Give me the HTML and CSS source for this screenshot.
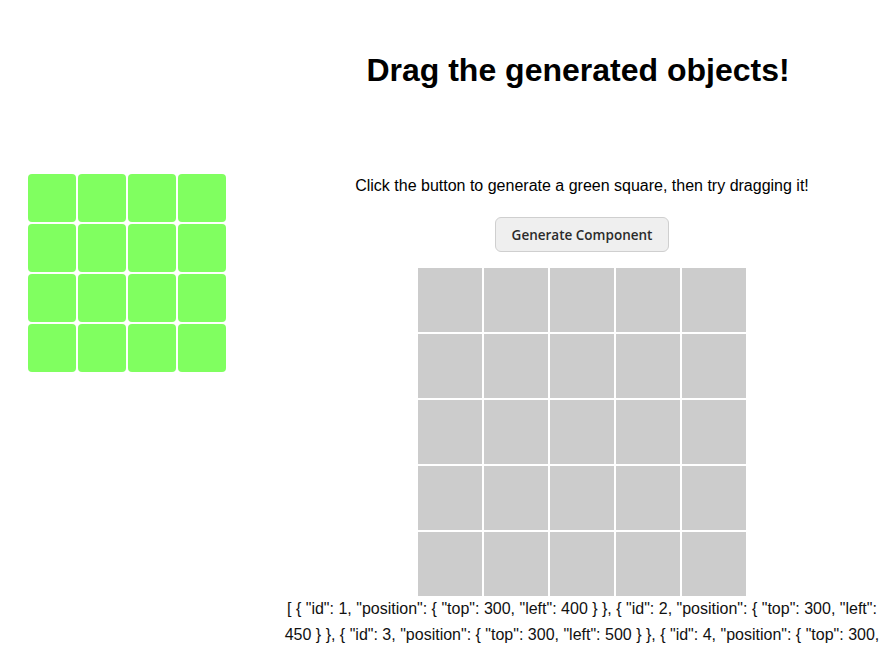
FILE: index.html
```html
<!DOCTYPE html>
<html lang="en">
<head>
<meta charset="utf-8">
<title>Drag the generated objects!</title>
<link rel="stylesheet" href="styles.css">
</head>
<body>
<div class="page">
  <aside class="palette">
    <div class="green-grid">
      <div class="tile"></div><div class="tile"></div><div class="tile"></div><div class="tile"></div>
      <div class="tile"></div><div class="tile"></div><div class="tile"></div><div class="tile"></div>
      <div class="tile"></div><div class="tile"></div><div class="tile"></div><div class="tile"></div>
      <div class="tile"></div><div class="tile"></div><div class="tile"></div><div class="tile"></div>
    </div>
  </aside>
  <main class="main">
    <h1 class="title">Drag the generated objects!</h1>
    <p class="intro">Click the button to generate a green square, then try dragging it!</p>
    <button class="gen-btn" type="button">Generate Component</button>
    <div class="board">
      <div class="cell"></div><div class="cell"></div><div class="cell"></div><div class="cell"></div><div class="cell"></div>
      <div class="cell"></div><div class="cell"></div><div class="cell"></div><div class="cell"></div><div class="cell"></div>
      <div class="cell"></div><div class="cell"></div><div class="cell"></div><div class="cell"></div><div class="cell"></div>
      <div class="cell"></div><div class="cell"></div><div class="cell"></div><div class="cell"></div><div class="cell"></div>
      <div class="cell"></div><div class="cell"></div><div class="cell"></div><div class="cell"></div><div class="cell"></div>
    </div>
    <div class="state">[ { "id": 1, "position": { "top": 300, "left": 400 } }, { "id": 2, "position": { "top": 300, "left": 450 } }, { "id": 3, "position": { "top": 300, "left": 500 } }, { "id": 4, "position": { "top": 300, "left": 550 } }, { "id": 5, "position": { "top": 350, "left": 400 } }, { "id": 6, "position": { "top": 350, "left": 450 } }, { "id": 7, "position": { "top": 350, "left": 500 } }, { "id": 8, "position": { "top": 350, "left": 550 } } ]</div>
  </main>
</div>
</body>
</html>
```

FILE: styles.css
```css
html {
  overflow: hidden;
}

body {
  margin: 8px;
  font-family: "Liberation Sans", Arial, sans-serif;
  font-size: 16px;
  color: #000;
  background: #fff;
}

.page {
  display: flex;
  align-items: flex-start;
}

.palette {
  width: 253px;
  flex: none;
  padding: 166px 0 0 20px;
}

.green-grid {
  display: grid;
  grid-template-columns: repeat(4, 48px);
  grid-auto-rows: 48px;
  gap: 2px;
}

.tile {
  background: #80ff60;
  border-radius: 4px;
}

.main {
  flex: 1;
  min-width: 0;
  display: flex;
  flex-direction: column;
  align-items: center;
  text-align: center;
}

.title {
  margin: 44px 8px 0 0;
  font-size: 32px;
  font-weight: bold;
}

.intro {
  margin: 88px 0 0;
}

.gen-btn {
  margin-top: 22px;
  height: 35px;
  box-sizing: border-box;
  padding: 0 16px;
  font-family: "Open Sans", sans-serif;
  font-weight: 600;
  font-size: 13.5px;
  color: #2b2b2b;
  background: #efefef;
  border: 1px solid #cfcfcf;
  border-radius: 6px;
}

.board {
  margin-top: 16px;
  display: grid;
  grid-template-columns: repeat(5, 64px);
  grid-auto-rows: 64px;
  gap: 2px;
}

.cell {
  background: #cccccc;
}

.state {
  line-height: 26px;
  color: #111;
}
```
